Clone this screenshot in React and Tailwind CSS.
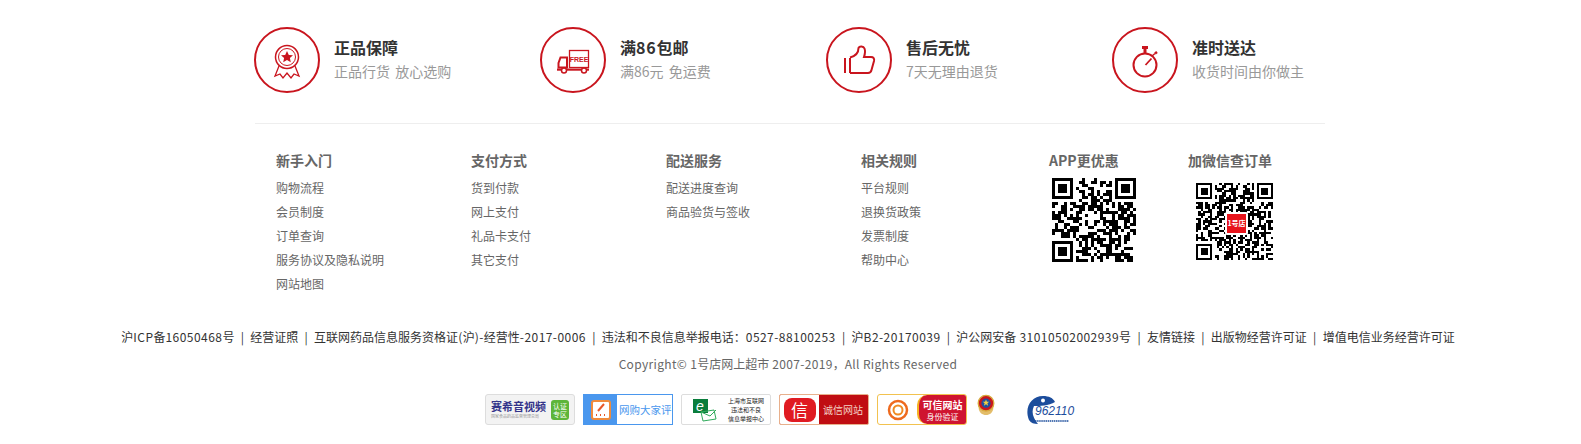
import React from 'react';

const RED = '#c9151e';

const services = [
    { title: '正品保障', sub: '正品行货 放心选购', icon: 'medal' },
    { title: '满86包邮', sub: '满86元 免运费', icon: 'truck' },
    { title: '售后无忧', sub: '7天无理由退货', icon: 'thumb' },
    { title: '准时送达', sub: '收货时间由你做主', icon: 'watch' },
];

const linkCols = [
    { title: '新手入门', links: ['购物流程', '会员制度', '订单查询', '服务协议及隐私说明', '网站地图'] },
    { title: '支付方式', links: ['货到付款', '网上支付', '礼品卡支付', '其它支付'] },
    { title: '配送服务', links: ['配送进度查询', '商品验货与签收'] },
    { title: '相关规则', links: ['平台规则', '退换货政策', '发票制度', '帮助中心'] },
];

const legal = [
    '沪ICP备16050468号',
    '经营证照',
    '互联网药品信息服务资格证(沪)-经营性-2017-0006',
    '违法和不良信息举报电话：0527-88100253',
    '沪B2-20170039',
    '沪公网安备 31010502002939号',
    '友情链接',
    '出版物经营许可证',
    '增值电信业务经营许可证',
];

const MedalIcon = () => (
    <svg width="66" height="66" viewBox="0 0 66 66" fill="none" stroke={RED}>
        <circle cx="33" cy="30" r="11.500" strokeWidth="1.500" />
        <circle cx="33" cy="30" r="8.500" strokeWidth="1" />
        <path d="M33 24l1.800 3.900 4.200.4-3.100 2.800.9 4.100-3.800-2.200-3.800 2.200.9-4.100-3.100-2.800 4.200-.4z" fill={RED} stroke="none" />
        <path d="M25 39l-4 10 5-2 3 4 4-5 4 5 3-4 5 2-4-10" strokeWidth="1.300" />
    </svg>
);

const TruckIcon = () => (
    <svg width="66" height="66" viewBox="0 0 66 66" fill="none">
        <rect x="29.500" y="23.500" width="19" height="17" stroke={RED} strokeWidth="1.300" />
        <text x="39" y="34.500" textAnchor="middle" fontSize="7" fontWeight="700" fill={RED} fontFamily="Liberation Sans, sans-serif">FREE</text>
        <path d="M18.500 36l2-5.500h6.500v10h-8.500z" stroke={RED} strokeWidth="2" />
        <rect x="17" y="41.500" width="32" height="2.200" fill={RED} />
        <circle cx="24" cy="43.500" r="2.500" fill="#fff" stroke={RED} strokeWidth="1.500" />
        <circle cx="44" cy="43.500" r="2.500" fill="#fff" stroke={RED} strokeWidth="1.500" />
    </svg>
);

const ThumbIcon = () => (
    <svg width="66" height="66" viewBox="0 0 66 66" fill="none" stroke={RED} strokeWidth="2">
        <path d="M19 31v15" />
        <path d="M24 31v15" />
        <path d="M24 46h18c2 0 3-1 3.500-3l2.500-9c.6-2.500-.5-4-3-4h-7c1-3 1.500-6 .5-8.500-1-2.500-5-2.800-6-.5 0 4-2.500 8-8.500 9.500" />
    </svg>
);

const WatchIcon = () => (
    <svg width="66" height="66" viewBox="0 0 66 66" fill="none" stroke={RED}>
        <circle cx="33" cy="38" r="11.500" strokeWidth="2" />
        <rect x="30" y="19" width="6" height="3" fill={RED} stroke="none" />
        <rect x="31.500" y="22" width="3" height="4" fill={RED} stroke="none" />
        <path d="M40 29l3-2.500" strokeWidth="1.500" />
        <path d="M43 26.500l2-1.500" strokeWidth="2.500" />
        <path d="M33.500 38l6-6.500" strokeWidth="1.800" />
    </svg>
);

const icons = { medal: MedalIcon, truck: TruckIcon, thumb: ThumbIcon, watch: WatchIcon };

// pseudo random modules with the three finder squares of a qr code
const qrPath = (size, seed) => {
    let state = seed;
    const next = () => {
        state = (state * 1103515245 + 12345) & 0x7fffffff;
        return (state >> 12) % 100;
    };
    const inFinder = (x, y) => (x < 8 && y < 8) || (x >= size - 8 && y < 8) || (x < 8 && y >= size - 8);
    let d = '';
    for (let y = 0; y < size; y++) {
        for (let x = 0; x < size; x++) {
            if (!inFinder(x, y) && next() < 55) d += `M${x} ${y}h1v1h-1z`;
        }
    }
    const finder = (x, y) => `M${x} ${y}h7v7h-7zM${x + 1} ${y + 1}v5h5v-5zM${x + 2} ${y + 2}h3v3h-3z`;
    return d + finder(0, 0) + finder(size - 7, 0) + finder(0, size - 7);
};

const QrCode = ({ size, modules, seed, children }) => (
    <div className="relative" style={{ width: size, height: size }}>
        <svg width={size} height={size} viewBox={`0 0 ${modules} ${modules}`} shapeRendering="crispEdges">
            <path d={qrPath(modules, seed)} fill="#000" fillRule="evenodd" />
        </svg>
        {children}
    </div>
);

// latin runs sit a little wider in the reference font
const Spaced = ({ text, className = 'tracking-[0.45px]' }) =>
    text.split(/([\x20-\x7e©]+)/).map((part, i) =>
        i % 2 ? <span key={i} className={className}>{part}</span> : part
    );

const Badge = ({ className = '', children }) => (
    <div className={`flex h-[31px] w-[90px] shrink-0 items-center overflow-hidden ${className}`}>{children}</div>
);

const App = () => {
    return (
        <div className="h-[444px] overflow-hidden bg-white font-['Noto_Sans_CJK_SC','Liberation_Sans',sans-serif]">
            <div className="ml-[254px] flex pt-[27px]">
                {services.map((s) => {
                    const Icon = icons[s.icon];
                    return (
                        <div key={s.title} className="flex w-[286px] shrink-0">
                            <div className="h-[66px] w-[66px] rounded-full border-2 border-[#c9151e]">
                                <div className="-m-[2px]"><Icon /></div>
                            </div>
                            <div className="ml-[14px] pt-[8px]">
                                <div className="text-[16px] leading-6 font-bold text-[#333]"><Spaced text={s.title} className="tracking-[0.8px]" /></div>
                                <div className="text-[14px] leading-6 [word-spacing:2px] text-[#999]">{s.sub}</div>
                            </div>
                        </div>
                    );
                })}
            </div>

            <div className="mt-[30px] ml-[255px] h-px w-[1070px] bg-[#eee]" />

            <div className="ml-[276px] flex pt-[26px]">
                {linkCols.map((col) => (
                    <div key={col.title} className="w-[195px] shrink-0">
                        <div className="mb-[6px] text-[14px] leading-5 font-bold text-[#666]">{col.title}</div>
                        {col.links.map((l) => (
                            <div key={l} className="text-[12px] leading-6 text-[#666]">{l}</div>
                        ))}
                    </div>
                ))}
                <div className="-ml-[7px] w-[139px] shrink-0">
                    <div className="mb-[8px] text-[14px] leading-5 font-bold text-[#666]">APP更优惠</div>
                    <div className="ml-[3px]"><QrCode size={84} modules={28} seed={77} /></div>
                </div>
                <div className="w-[100px] shrink-0">
                    <div className="mb-[13px] text-[14px] leading-5 font-bold text-[#666]">加微信查订单</div>
                    <div className="ml-[8px]">
                        <QrCode size={77} modules={33} seed={4242}>
                            <div className="absolute top-[29px] left-[29px] box-content flex h-[19px] w-[19px] items-center justify-center rounded-[2px] border-2 border-white bg-[#e8141c] text-[7px] leading-none font-bold text-white">1号店</div>
                        </QrCode>
                    </div>
                </div>
            </div>

            <div className="mt-[31px] flex justify-center pr-[5px] text-[12px] leading-5 text-[#333]">
                {legal.map((t, i) => (
                    <span key={t} className="whitespace-nowrap">
                        {i > 0 && <span className="mx-[6.300px]">|</span>}
                        <Spaced text={t} />
                    </span>
                ))}
            </div>
            <div className="mt-[5px] pr-[5px] text-center text-[12px] leading-6 text-[#666]">
                <Spaced text="Copyright© 1号店网上超市 2007-2019，All Rights Reserved" className="tracking-[0.34px]" />
            </div>

            <div className="mt-[18px] ml-[485px] flex items-start gap-2">
                <Badge className="justify-between rounded-[3px] border border-[#ddd] bg-[#f3f3f3] px-[5px]">
                    <div>
                        <div className="text-[11px] leading-[13px] font-bold whitespace-nowrap text-[#33338a]">赛希音视频</div>
                        <div className="text-[4px] leading-[6px] whitespace-nowrap text-[#999]">国家食品药品监督管理总局</div>
                    </div>
                    <div className="flex h-[20px] w-[18px] items-center justify-center rounded-[3px] bg-[#5db53a] text-center text-[7px] leading-[8px] text-white">认证专区</div>
                </Badge>
                <Badge className="border border-[#4a97ee] bg-white">
                    <div className="flex h-full w-[33px] shrink-0 items-center justify-center bg-[#4a97ee]">
                        <svg width="20" height="20" viewBox="0 0 20 20">
                            <rect x="1" y="1" width="18" height="18" rx="2" fill="#fff" stroke="#f08b3c" strokeWidth="2" />
                            <path d="M7 11l6-7" stroke="#e8582a" strokeWidth="2" />
                            <path d="M5 15h1M9 15h1M13 15h1" stroke="#e8582a" strokeWidth="2" />
                        </svg>
                    </div>
                    <div className="pl-[2px] text-[10.500px] whitespace-nowrap text-[#4a97ee]">网购大家评</div>
                </Badge>
                <Badge className="justify-between rounded-[2px] border border-[#ddd] bg-white pr-[6px] pl-[11px]">
                    <svg width="24" height="24" viewBox="0 0 24 24">
                        <rect x="0" y="1" width="15" height="14" fill="#0a7d3c" />
                        <text x="7" y="13" textAnchor="middle" fontSize="14" fontStyle="italic" fill="#fff" fontFamily="Liberation Sans, sans-serif">e</text>
                        <path d="M8 14l13-2 2 9-13 2zM8 14l9 4 6-6" fill="#fff" stroke="#2faa5b" strokeWidth="1" />
                    </svg>
                    <div className="text-center text-[6px] leading-[9px] whitespace-nowrap text-[#222]">
                        <div>上海市互联网</div>
                        <div>违法和不良</div>
                        <div>信息举报中心</div>
                    </div>
                </Badge>
                <Badge className="rounded-[2px] border border-[#e8b08c] bg-[#c00d12]">
                    <div className="flex h-full w-[39px] shrink-0 items-center justify-center bg-white">
                        <div className="flex h-[24px] w-[32px] items-center justify-center rounded-[8px] bg-[#e01b22] text-[17px] leading-none text-white">信</div>
                    </div>
                    <div className="pl-[4px] text-[10px] whitespace-nowrap text-[#f3d2c4]">诚信网站</div>
                </Badge>
                <Badge className="rounded-[3px] border border-[#f2c24f] bg-white">
                    <div className="flex h-full w-[39px] shrink-0 items-center justify-center">
                        <svg width="22" height="22" viewBox="0 0 22 22" fill="none">
                            <circle cx="11" cy="11" r="9" stroke="#ee6a1f" strokeWidth="2.500" />
                            <circle cx="11" cy="11" r="4.500" stroke="#f08a22" strokeWidth="2" />
                        </svg>
                    </div>
                    <div className="flex h-full flex-1 flex-col items-center justify-center rounded-l-[10px] border-l-2 border-[#f5b323] bg-[#cf1430] text-white">
                        <div className="text-[10px] leading-[13px] font-bold whitespace-nowrap">可信网站</div>
                        <div className="text-[8px] leading-[11px] whitespace-nowrap">身份验证</div>
                    </div>
                </Badge>
                <svg width="20" height="22" viewBox="0 0 20 24" className="ml-px shrink-0">
                    <path d="M2 15c0 5 4 8 8 8s8-3 8-8z" fill="#e3bd6a" />
                    <circle cx="10" cy="10" r="8.500" fill="#c8161d" stroke="#d8a93e" strokeWidth="1.500" />
                    <circle cx="10" cy="10" r="5" fill="#1f4fa0" />
                    <path d="M10 6l1 2.500h2.500l-2 1.600.8 2.600-2.300-1.500-2.300 1.500.8-2.600-2-1.600H9z" fill="#f4d03f" />
                </svg>
                <div className="relative ml-[21px] h-[31px] w-[51px] shrink-0">
                    <svg width="51" height="31" viewBox="0 0 51 31" fill="none">
                        <path d="M4 26C-1 14 6 2 18 2c6 0 10 2 12 6-6 4-16 4-21 4-3 6-1 12 4 18-4 0-7-1-9-4z" fill="#1c4d9c" />
                        <circle cx="18" cy="6.500" r="2" fill="#fff" />
                        <path d="M10 27h34" stroke="#1c4d9c" strokeWidth="1.500" strokeDasharray="1.500 .6" />
                    </svg>
                    <div className="absolute top-[11px] left-[10px] font-['Liberation_Sans',sans-serif] text-[12px] leading-none text-[#1c4d9c] italic">962110</div>
                </div>
            </div>
        </div>
    );
};

export default App;
